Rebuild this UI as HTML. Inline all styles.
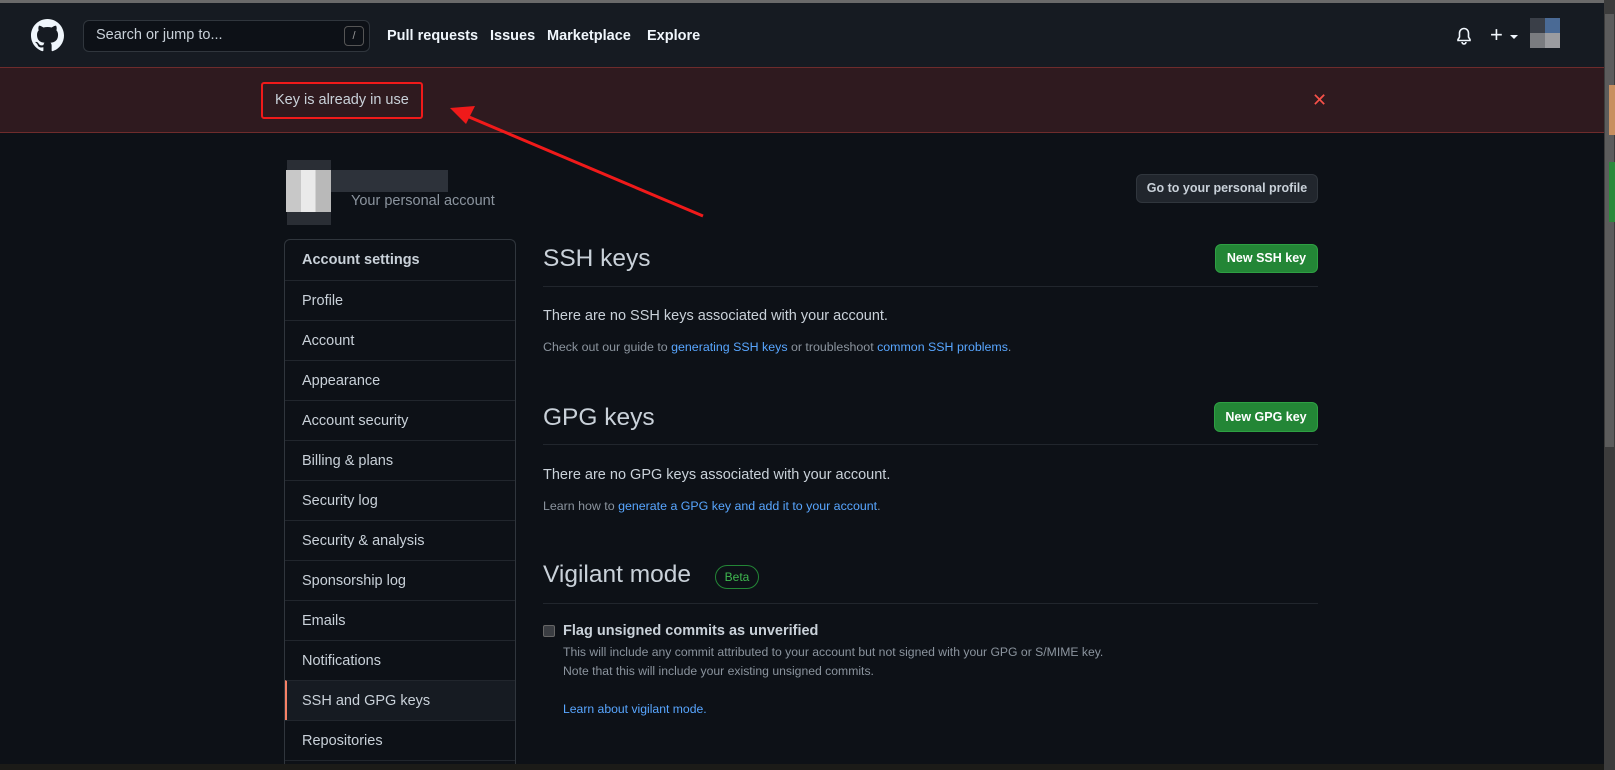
<!DOCTYPE html>
<html style="width:1615px;height:770px;overflow:hidden"><head><meta charset="utf-8"><style>
*{box-sizing:border-box;margin:0;padding:0}
body{width:1615px;height:770px;overflow:hidden;background:#0d1117;font-family:"Liberation Sans",sans-serif;color:#c9d1d9;position:relative}
.a{position:absolute;white-space:nowrap}
a{color:#58a6ff;text-decoration:none}
.row{position:absolute;left:0;width:100%;height:40px;border-top:1px solid #21262d;padding-left:17px;line-height:40px;font-size:14.5px;color:#c9d1d9}
.btn{position:absolute;border-radius:6px;font-size:12.5px;font-weight:bold;text-align:center}
.g{background:#238636;color:#fff;border:1px solid #2ea043}
h2{position:absolute;font-weight:normal;font-size:24.5px;color:#c9d1d9}
.hr{position:absolute;left:543px;width:775px;height:1px;background:#21262d}
</style></head><body>
<div class="a" style="left:0;top:0;width:1604px;height:67px;background:#161b22;border-top:3px solid #6a6a6a"></div>
<svg class="a" style="left:31px;top:19px" width="33" height="33" viewBox="0 0 16 16"><path fill="#f0f6fc" d="M8 0C3.58 0 0 3.58 0 8c0 3.54 2.29 6.53 5.47 7.59.4.07.55-.17.55-.38 0-.19-.01-.82-.01-1.49-2.01.37-2.53-.49-2.69-.94-.09-.23-.48-.94-.82-1.13-.28-.15-.68-.52-.01-.53.63-.01 1.08.58 1.23.82.72 1.21 1.87.87 2.33.66.07-.52.28-.87.51-1.07-1.78-.2-3.64-.89-3.64-3.95 0-.87.31-1.59.82-2.15-.08-.2-.36-1.02.08-2.12 0 0 .67-.21 2.2.82.64-.18 1.32-.27 2-.27.68 0 1.36.09 2 .27 1.53-1.04 2.2-.82 2.2-.82.44 1.1.16 1.92.08 2.12.51.56.82 1.27.82 2.15 0 3.07-1.87 3.75-3.65 3.95.29.25.54.73.54 1.48 0 1.07-.01 1.93-.01 2.2 0 .21.15.46.55.38A8.013 8.013 0 0016 8c0-4.42-3.58-8-8-8z"/></svg>
<div class="a" style="left:83px;top:20px;width:287px;height:32px;border:1px solid #30363d;border-radius:6px;background:#0d1117"></div>
<div class="a" style="left:96px;top:27px;font-size:14.5px;color:#c9d1d9">Search or jump to...</div>
<div class="a" style="left:344px;top:26px;width:20px;height:20px;border:1px solid #555;border-radius:4px;font-size:11px;color:#999;text-align:center;line-height:18px">/</div>
<div class="a" style="left:387px;top:28px;font-size:14.5px;font-weight:bold;color:#f0f6fc">Pull requests</div>
<div class="a" style="left:490px;top:28px;font-size:14.5px;font-weight:bold;color:#f0f6fc">Issues</div>
<div class="a" style="left:547px;top:28px;font-size:14.5px;font-weight:bold;color:#f0f6fc">Marketplace</div>
<div class="a" style="left:647px;top:28px;font-size:14.5px;font-weight:bold;color:#f0f6fc">Explore</div>
<svg class="a" style="left:1456px;top:27px" width="16" height="18" viewBox="0 0 16 18"><path d="M8 1.5a4.5 4.5 0 0 0-4.5 4.5v4L2 12.5v1h12v-1L12.5 10V6A4.5 4.5 0 0 0 8 1.5zM6 15a2 2 0 0 0 4 0" fill="none" stroke="#f0f6fc" stroke-width="1.6"/></svg>
<div class="a" style="left:1490px;top:22px;font-size:22px;color:#f0f6fc">+</div>
<div class="a" style="left:1510px;top:35px;border:4px solid transparent;border-top:4px solid #f0f6fc"></div>
<div class="a" style="left:1530px;top:18px;width:30px;height:30px;background:linear-gradient(90deg,#3a3f48 50%,#4a6a95 50%)"></div>
<div class="a" style="left:1530px;top:33px;width:30px;height:15px;background:linear-gradient(90deg,#7a7c80 50%,#9b9ca0 50%)"></div>
<div class="a" style="left:0;top:67px;width:1604px;height:66px;background:#2f1a1f;border-top:1px solid #6e2c2c;border-bottom:1px solid #6e2c2c"></div>
<div class="a" style="left:261px;top:82px;width:162px;height:37px;border:2px solid #f01a1a;border-radius:3px"></div>
<div class="a" style="left:275px;top:92px;font-size:14.5px;color:#c9d1d9">Key is already in use</div>
<div class="a" style="left:1312px;top:90px;font-size:18px;color:#f85149">✕</div>
<svg class="a" style="left:0;top:0" width="1615" height="770"><line x1="703" y1="216" x2="462" y2="114" stroke="#f01a1a" stroke-width="3"/><polygon points="450,108 475,106 466,124" fill="#f01a1a"/></svg>
<div class="a" style="left:287px;top:160px;width:44px;height:65px;background:#2a2e35"></div>
<div class="a" style="left:286px;top:170px;width:45px;height:42px;background:linear-gradient(90deg,#c8c8c8 33%,#eaeaea 33%,#eaeaea 66%,#b9b9b9 66%)"></div>
<div class="a" style="left:331px;top:170px;width:117px;height:22px;background:#2d323a"></div>
<div class="a" style="left:351px;top:193px;font-size:14.5px;color:#8b949e">Your personal account</div>
<div class="btn" style="left:1136px;top:174px;width:182px;height:29px;background:#21262d;border:1px solid #30363d;color:#c9d1d9;line-height:27px">Go to your personal profile</div>
<div class="a" style="left:284px;top:239px;width:232px;height:531px;border:1px solid #30363d;border-bottom:none;border-radius:6px 6px 0 0;overflow:hidden">
<div class="row" style="top:0;border-top:none;font-weight:bold">Account settings</div>
<div class="row" style="top:40px">Profile</div>
<div class="row" style="top:80px">Account</div>
<div class="row" style="top:120px">Appearance</div>
<div class="row" style="top:160px">Account security</div>
<div class="row" style="top:200px">Billing &amp; plans</div>
<div class="row" style="top:240px">Security log</div>
<div class="row" style="top:280px">Security &amp; analysis</div>
<div class="row" style="top:320px">Sponsorship log</div>
<div class="row" style="top:360px">Emails</div>
<div class="row" style="top:400px">Notifications</div>
<div class="row" style="top:440px;background:#161b22;border-left:2px solid #f78166;padding-left:15px">SSH and GPG keys</div>
<div class="row" style="top:480px">Repositories</div>
<div class="row" style="top:520px;height:11px"></div>
</div>
<h2 style="left:543px;top:245px">SSH keys</h2>
<div class="btn g" style="left:1215px;top:244px;width:103px;height:29px;line-height:27px">New SSH key</div>
<div class="hr" style="top:286px"></div>
<div class="a" style="left:543px;top:308px;font-size:14.5px">There are no SSH keys associated with your account.</div>
<div class="a" style="left:543px;top:340px;font-size:12.4px;color:#8b949e">Check out our guide to <a>generating SSH keys</a> or troubleshoot <a>common SSH problems</a>.</div>
<h2 style="left:543px;top:404px">GPG keys</h2>
<div class="btn g" style="left:1214px;top:402px;width:104px;height:30px;line-height:28px">New GPG key</div>
<div class="hr" style="top:444px"></div>
<div class="a" style="left:543px;top:467px;font-size:14.5px">There are no GPG keys associated with your account.</div>
<div class="a" style="left:543px;top:499px;font-size:12.4px;color:#8b949e">Learn how to <a>generate a GPG key and add it to your account</a>.</div>
<h2 style="left:543px;top:561px">Vigilant mode</h2>
<div class="a" style="left:715px;top:565px;width:44px;height:24px;border:1px solid #238636;border-radius:12px;font-size:12px;color:#3fb950;text-align:center;line-height:22px">Beta</div>
<div class="hr" style="top:603px"></div>
<div class="a" style="left:543px;top:625px;width:12px;height:12px;background:#3a3d42;border:1px solid #666;border-radius:2px"></div>
<div class="a" style="left:563px;top:623px;font-size:14.5px;font-weight:bold">Flag unsigned commits as unverified</div>
<div class="a" style="left:563px;top:645px;font-size:12.2px;color:#8b949e">This will include any commit attributed to your account but not signed with your GPG or S/MIME key.</div>
<div class="a" style="left:563px;top:664px;font-size:12.2px;color:#8b949e">Note that this will include your existing unsigned commits.</div>
<div class="a" style="left:563px;top:702px;font-size:12.2px"><a>Learn about vigilant mode.</a></div>
<div class="a" style="left:0;top:764px;width:1615px;height:6px;background:#1b1b18"></div>
<div class="a" style="left:1604px;top:0;width:11px;height:770px;background:#3c3c3c"></div>
<div class="a" style="left:1605px;top:14px;width:9px;height:433px;background:#5c5c5c"></div>
<div class="a" style="left:1609px;top:85px;width:6px;height:50px;background:#c89060"></div>
<div class="a" style="left:1609px;top:162px;width:6px;height:60px;background:#2a8a3a"></div>
</body></html>
